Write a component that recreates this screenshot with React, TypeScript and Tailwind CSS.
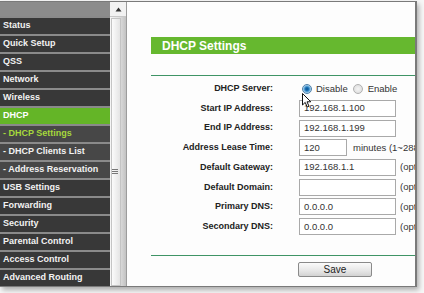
import React from 'react'

interface MenuItem {
  label: string
  kind?: 'active' | 'sub' | 'subActive'
}

const menu: MenuItem[] = [
  { label: 'Status' },
  { label: 'Quick Setup' },
  { label: 'QSS' },
  { label: 'Network' },
  { label: 'Wireless' },
  { label: 'DHCP', kind: 'active' },
  { label: '- DHCP Settings', kind: 'subActive' },
  { label: '- DHCP Clients List', kind: 'sub' },
  { label: '- Address Reservation', kind: 'sub' },
  { label: 'USB Settings' },
  { label: 'Forwarding' },
  { label: 'Security' },
  { label: 'Parental Control' },
  { label: 'Access Control' },
  { label: 'Advanced Routing' },
]

const itemClass = (kind?: MenuItem['kind']) => {
  switch (kind) {
    case 'active': return 'bg-[#64b527] text-white'
    case 'subActive': return 'bg-[#474747] text-[#a6d83c]'
    case 'sub': return 'bg-[#474747] text-[#f2f2f2]'
    default: return 'bg-[#383838] text-[#f2f2f2]'
  }
}

const TextInput = ({ value, width = 'w-[97px]' }: { value: string; width?: string }) => (
  <div className={`${width} h-[17px] shrink-0 border border-[#a9a9a9] bg-white flex items-center pl-[4px] text-[9.5px] text-[#333]`}>
    {value}
  </div>
)

const Radio = ({ checked }: { checked?: boolean }) => (
  <span
    className={`inline-block w-[10px] h-[10px] rounded-full border ${
      checked
        ? 'border-[#4f7fa8] bg-[radial-gradient(circle,#0d4f8a_0%,#1b73b8_30%,#5fa6d8_50%,#c8e2f3_75%,#e6f2fa_100%)]'
        : 'border-[#b0b0b0] bg-[radial-gradient(circle,#f4f4f4_0%,#d9d9d9_100%)]'
    }`}
  />
)

const Optional = () => (
  <span className="ml-[4px] text-[9.5px] text-[#333] whitespace-nowrap">(opt</span>
)

const rows: { label: string; control: React.ReactNode }[] = [
  {
    label: 'DHCP Server:',
    control: (
      <div className="flex items-center text-[9.5px] text-[#333]">
        <span className="ml-[3px] flex"><Radio checked /></span>
        <span className="ml-[4px]">Disable</span>
        <span className="ml-[5px] flex"><Radio /></span>
        <span className="ml-[5px]">Enable</span>
      </div>
    ),
  },
  { label: 'Start IP Address:', control: <TextInput value="192.168.1.100" /> },
  { label: 'End IP Address:', control: <TextInput value="192.168.1.199" /> },
  {
    label: 'Address Lease Time:',
    control: (
      <div className="flex items-center">
        <TextInput value="120" width="w-[48px]" />
        <span className="ml-[6px] text-[9.5px] text-[#333] whitespace-nowrap">minutes (1~288</span>
      </div>
    ),
  },
  {
    label: 'Default Gateway:',
    control: (
      <div className="flex items-center">
        <TextInput value="192.168.1.1" />
        <Optional />
      </div>
    ),
  },
  {
    label: 'Default Domain:',
    control: (
      <div className="flex items-center">
        <TextInput value="" />
        <Optional />
      </div>
    ),
  },
  {
    label: 'Primary DNS:',
    control: (
      <div className="flex items-center">
        <TextInput value="0.0.0.0" />
        <Optional />
      </div>
    ),
  },
  {
    label: 'Secondary DNS:',
    control: (
      <div className="flex items-center">
        <TextInput value="0.0.0.0" />
        <Optional />
      </div>
    ),
  },
]

export default function App() {
  return (
    <div className="w-[424px] h-[293px] bg-[#f7f7f7] overflow-hidden font-['Liberation_Sans',Arial,sans-serif]">
      <div className="mt-px w-[417px] h-[286px] flex border-t border-r-2 border-b border-[#7a7a7a] shadow-[2px_3px_5px_rgba(0,0,0,0.3)] bg-white">
        {/* Left menu */}
        <div className="w-[110px] shrink-0 bg-[#8a8a8a] flex flex-col">
          <div className="h-[14px] bg-[#8c8c8c]" />
          {menu.map((item) => (
            <div
              key={item.label}
              className={`h-[16px] mt-[2px] pl-[3px] flex items-center text-[9px] font-bold whitespace-nowrap ${itemClass(item.kind)}`}
            >
              {item.label}
            </div>
          ))}
        </div>

        {/* Scrollbar */}
        <div className="w-[17px] shrink-0 flex flex-col border-r border-[#9c9c9c] bg-[linear-gradient(to_right,#f6f6f6,#e2e2e2_55%,#c2c2c2)]">
          <div className="h-[15px] flex items-center justify-center bg-[#f2f2f2] border-b border-[#c8c8c8]">
            <svg width="7" height="5" viewBox="0 0 7 5">
              <path d="M3.5 0.5 L6.5 4.5 L0.5 4.5 Z" fill="#333" />
            </svg>
          </div>
          <div className="flex-1 ml-px mr-[5px] mt-px border border-[#c4c4c4] bg-[linear-gradient(to_right,#fbfbfb,#e4e4e4)] flex items-center justify-center">
            <div className="flex flex-col gap-[1px] mt-[38px] -ml-[2px]">
              <span className="block w-[6px] h-px bg-[#777]" />
              <span className="block w-[6px] h-px bg-[#777]" />
              <span className="block w-[6px] h-px bg-[#777]" />
            </div>
          </div>
        </div>

        {/* Content */}
        <div className="flex-1 relative overflow-hidden bg-[#fdfdfd] pt-[35px] pl-[24px]">
          <div className="h-[17px] w-[300px] bg-[#66b82f] flex items-center pl-[11px] text-[12px] font-bold text-white">
            DHCP Settings
          </div>
          <div className="mt-[21px] h-px w-[300px] bg-[#3f9466]" />

          <div className="mt-[3px] grid grid-cols-[122px_1fr] gap-x-[26px]">
            {rows.map((row) => (
              <React.Fragment key={row.label}>
                <div className="h-[19.7px] flex items-center justify-end text-[9px] font-bold text-[#222] whitespace-nowrap">
                  {row.label}
                </div>
                <div className="h-[19.7px] flex items-center">{row.control}</div>
              </React.Fragment>
            ))}
          </div>

          <div className="mt-[18px] h-px w-[300px] bg-[#3f9466]" />
          <div className="mt-[6px] ml-[147px] w-[74px] h-[15px] rounded-[2px] border border-[#8a8a8a] bg-[linear-gradient(to_bottom,#fbfbfb,#e6e6e6_60%,#d2d2d2)] flex items-center justify-center text-[10px] text-[#222]">
            Save
          </div>

          {/* Mouse cursor over the radio */}
          <svg className="absolute left-[175px] top-[91px]" width="10" height="16" viewBox="0 0 10 16">
            <path d="M0.5 0.5 L0.5 12 L3.2 9.4 L5.2 14 L7 13.2 L5 8.8 L8.8 8.8 Z" fill="#fff" stroke="#111" strokeWidth="1" strokeLinejoin="round" />
          </svg>
        </div>
      </div>
    </div>
  )
}
